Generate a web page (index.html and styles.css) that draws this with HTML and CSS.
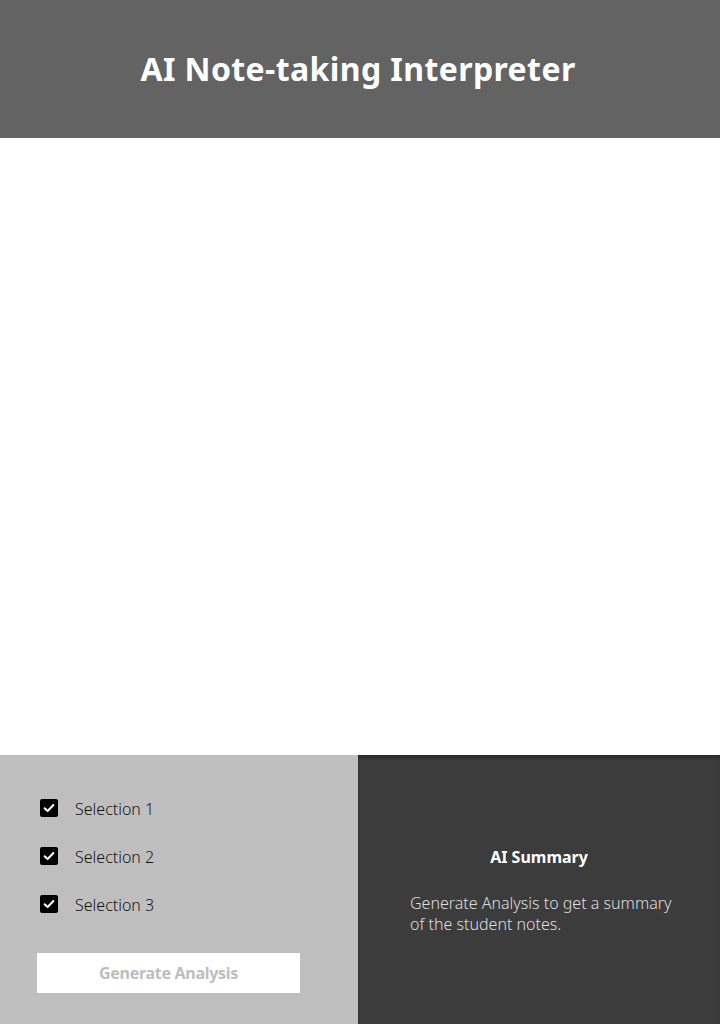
FILE: index.html
```html
<!DOCTYPE html>
<html lang="en">
<head>
<meta charset="utf-8">
<title>AI Note-taking Interpreter</title>
<link rel="stylesheet" href="styles.css">
</head>
<body>
<header class="header">
  <h1 class="title">AI Note-taking Interpreter</h1>
</header>
<main class="canvas"></main>
<section class="bottom">
  <div class="controls">
    <ul class="options">
      <li class="option"><span class="box"><svg viewBox="0 0 18 18" width="18" height="18"><path d="M4.6 9.2 L7.6 12 L13.4 6" fill="none" stroke="#fff" stroke-width="2" stroke-linecap="round" stroke-linejoin="round"/></svg></span><span class="label">Selection 1</span></li>
      <li class="option"><span class="box"><svg viewBox="0 0 18 18" width="18" height="18"><path d="M4.6 9.2 L7.6 12 L13.4 6" fill="none" stroke="#fff" stroke-width="2" stroke-linecap="round" stroke-linejoin="round"/></svg></span><span class="label">Selection 2</span></li>
      <li class="option"><span class="box"><svg viewBox="0 0 18 18" width="18" height="18"><path d="M4.6 9.2 L7.6 12 L13.4 6" fill="none" stroke="#fff" stroke-width="2" stroke-linecap="round" stroke-linejoin="round"/></svg></span><span class="label">Selection 3</span></li>
    </ul>
    <button class="generate" type="button">Generate Analysis</button>
  </div>
  <div class="summary">
    <h2 class="summary-title">AI Summary</h2>
    <p class="summary-text">Generate Analysis to get a summary of the student notes.</p>
  </div>
</section>
</body>
</html>
```
FILE: styles.css
```css
* { box-sizing: border-box; }
html, body { margin: 0; padding: 0; }
body {
  width: 720px;
  height: 1024px;
  font-family: "Noto Sans", "Open Sans", sans-serif;
  background: #ffffff;
  display: flex;
  flex-direction: column;
  overflow: hidden;
}
.header {
  height: 138px;
  background: #636363;
  display: flex;
  align-items: center;
  justify-content: center;
}
.title {
  margin: 0;
  color: #ffffff;
  font-size: 32px;
  font-weight: 700;
  line-height: 40px;
  letter-spacing: 0.4px;
  transform: translateX(-2px);
}
.canvas {
  height: 617px;
  background: #ffffff;
}
.bottom {
  height: 269px;
  display: grid;
  grid-template-columns: 358px 362px;
}
.controls {
  background: #bfbfbf;
  padding: 41px 0 0 37px;
  display: flex;
  flex-direction: column;
}
.options {
  list-style: none;
  margin: 0;
  padding: 0;
  display: flex;
  flex-direction: column;
  gap: 24px;
}
.option {
  height: 24px;
  display: flex;
  align-items: center;
  gap: 17px;
}
.box {
  width: 18px;
  height: 18px;
  margin-left: 3px;
  background: #000000;
  border-radius: 2px;
  display: flex;
}
.label {
  font-size: 16px;
  font-weight: 300;
  color: #161616;
  line-height: 24px;
  transform: translateY(1px);
}
.generate {
  margin-top: 37px;
  width: 263px;
  height: 40px;
  border: none;
  background: #ffffff;
  color: #bdbdbd;
  font-family: inherit;
  font-size: 16px;
  font-weight: 700;
  letter-spacing: -0.3px;
  padding: 0;
}
.summary {
  background: #3c3c3c;
  box-shadow: inset 0 4px 4px -2px rgba(0, 0, 0, 0.45);
  display: flex;
  flex-direction: column;
  justify-content: center;
  padding: 0 40px 0 52px;
  gap: 23px;
}
.summary-title {
  margin: 0;
  text-align: center;
  color: #ffffff;
  font-size: 16px;
  font-weight: 700;
  line-height: 24px;
  padding-right: 12px;
}
.summary-text {
  margin: 0;
  color: #dedede;
  font-size: 16px;
  font-weight: 300;
  line-height: 21px;
  transform: translateY(1px);
}
```
